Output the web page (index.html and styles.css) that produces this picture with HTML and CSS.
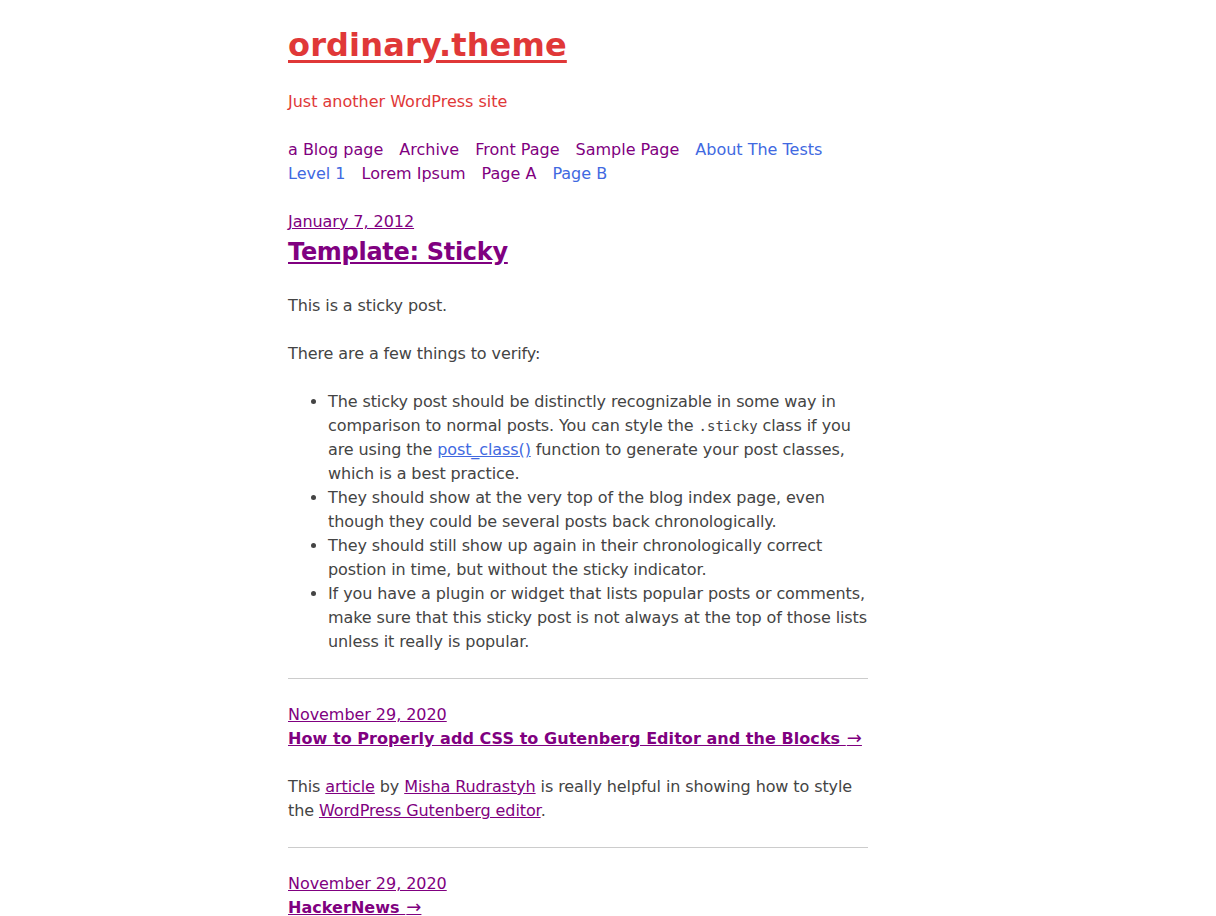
FILE: index.html
```html
<!DOCTYPE html>
<html lang="en">
<head>
<meta charset="utf-8">
<title>ordinary.theme</title>
<link rel="stylesheet" href="styles.css">
</head>
<body>
<div class="page">
  <header class="site-header">
    <h1 class="site-title"><a href="#">ordinary.theme</a></h1>
    <p class="tagline">Just another WordPress site</p>
    <nav class="menu">
      <a class="visited" href="#">a Blog page</a>
      <a class="visited" href="#">Archive</a>
      <a class="visited" href="#">Front Page</a>
      <a class="visited" href="#">Sample Page</a>
      <a class="fresh" href="#">About The Tests</a>
      <a class="fresh" href="#">Level 1</a>
      <a class="visited" href="#">Lorem Ipsum</a>
      <a class="visited" href="#">Page A</a>
      <a class="fresh" href="#">Page B</a>
    </nav>
  </header>
  <main class="content">
    <article class="post">
      <a class="post-date" href="#">January 7, 2012</a>
      <h2 class="post-title big"><a href="#">Template: Sticky</a></h2>
      <div class="post-body">
        <p>This is a sticky post.</p>
        <p>There are a few things to verify:</p>
        <ul>
          <li>The sticky post should be distinctly recognizable in some way in comparison to normal posts. You can style the <code>.sticky</code> class if you are using the <a class="fresh" href="#">post_class()</a> function to generate your post classes, which is a best practice.</li>
          <li>They should show at the very top of the blog index page, even though they could be several posts back chronologically.</li>
          <li>They should still show up again in their chronologically correct postion in time, but without the sticky indicator.</li>
          <li>If you have a plugin or widget that lists popular posts or comments, make sure that this sticky post is not always at the top of those lists unless it really is popular.</li>
        </ul>
      </div>
    </article>
    <hr class="sep">
    <article class="post">
      <a class="post-date" href="#">November 29, 2020</a>
      <h2 class="post-title"><a href="#">How to Properly add CSS to Gutenberg Editor and the Blocks <span class="arrow">&rarr;</span></a></h2>
      <div class="post-body">
        <p>This <a class="visited" href="#">article</a> by <a class="visited" href="#">Misha Rudrastyh</a> is really helpful in showing how to style the <a class="visited" href="#">WordPress Gutenberg editor</a>.</p>
      </div>
    </article>
    <hr class="sep">
    <article class="post">
      <a class="post-date" href="#">November 29, 2020</a>
      <h2 class="post-title"><a href="#">HackerNews <span class="arrow">&rarr;</span></a></h2>
    </article>
  </main>
</div>
</body>
</html>
```
FILE: styles.css
```css
html, body {
  margin: 0;
  padding: 0;
  background: #fff;
}
body {
  font-family: "DejaVu Sans", sans-serif;
  font-size: 16px;
  line-height: 24px;
  color: #444;
}
.page {
  width: 640px;
  margin: 0 auto;
  padding-top: 21px;
}
.site-header,
.content {
  width: 580px;
}
.site-title {
  margin: 0;
  font-size: 32px;
  line-height: 48px;
  font-weight: bold;
  letter-spacing: 0.15px;
}
.site-title a {
  color: #e03838;
  text-decoration: underline;
  text-decoration-thickness: 3px;
  text-underline-offset: 4px;
}
.tagline {
  margin: 21px 0 0;
  color: #e03838;
}
.menu {
  margin-top: 24px;
  display: flex;
  flex-wrap: wrap;
  column-gap: 16px;
}
.menu a {
  text-decoration: none;
}
a.visited,
.post-date,
.post-title a {
  color: #800080;
}
a.fresh {
  color: #4169e1;
}
.content {
  margin-top: 24px;
}
.post {
  display: flex;
  flex-direction: column;
  align-items: flex-start;
}
.post-date {
  color: #800080;
  letter-spacing: -0.05px;
}
.post-title {
  margin: 0;
  font-size: 16px;
  line-height: 24px;
  font-weight: bold;
  letter-spacing: 0.05px;
}
.post-title.big {
  font-size: 24px;
  line-height: 36px;
  letter-spacing: -0.3px;
}
.arrow {
  font-weight: normal;
  font-size: 18px;
  line-height: 1;
  margin-left: 1px;
}
.post-body {
  margin-top: 24px;
  align-self: stretch;
  letter-spacing: -0.1px;
}
.post-body p {
  margin: 0 0 24px;
}
.post-body ul {
  margin: 0 0 24px;
  padding-left: 40px;
}
code {
  font-family: "DejaVu Sans Mono", monospace;
  font-size: 14px;
  letter-spacing: 0;
}
.sep {
  margin: 0 0 24px;
  border: 0;
  border-top: 1px solid #ccc;
  height: 0;
}
```
